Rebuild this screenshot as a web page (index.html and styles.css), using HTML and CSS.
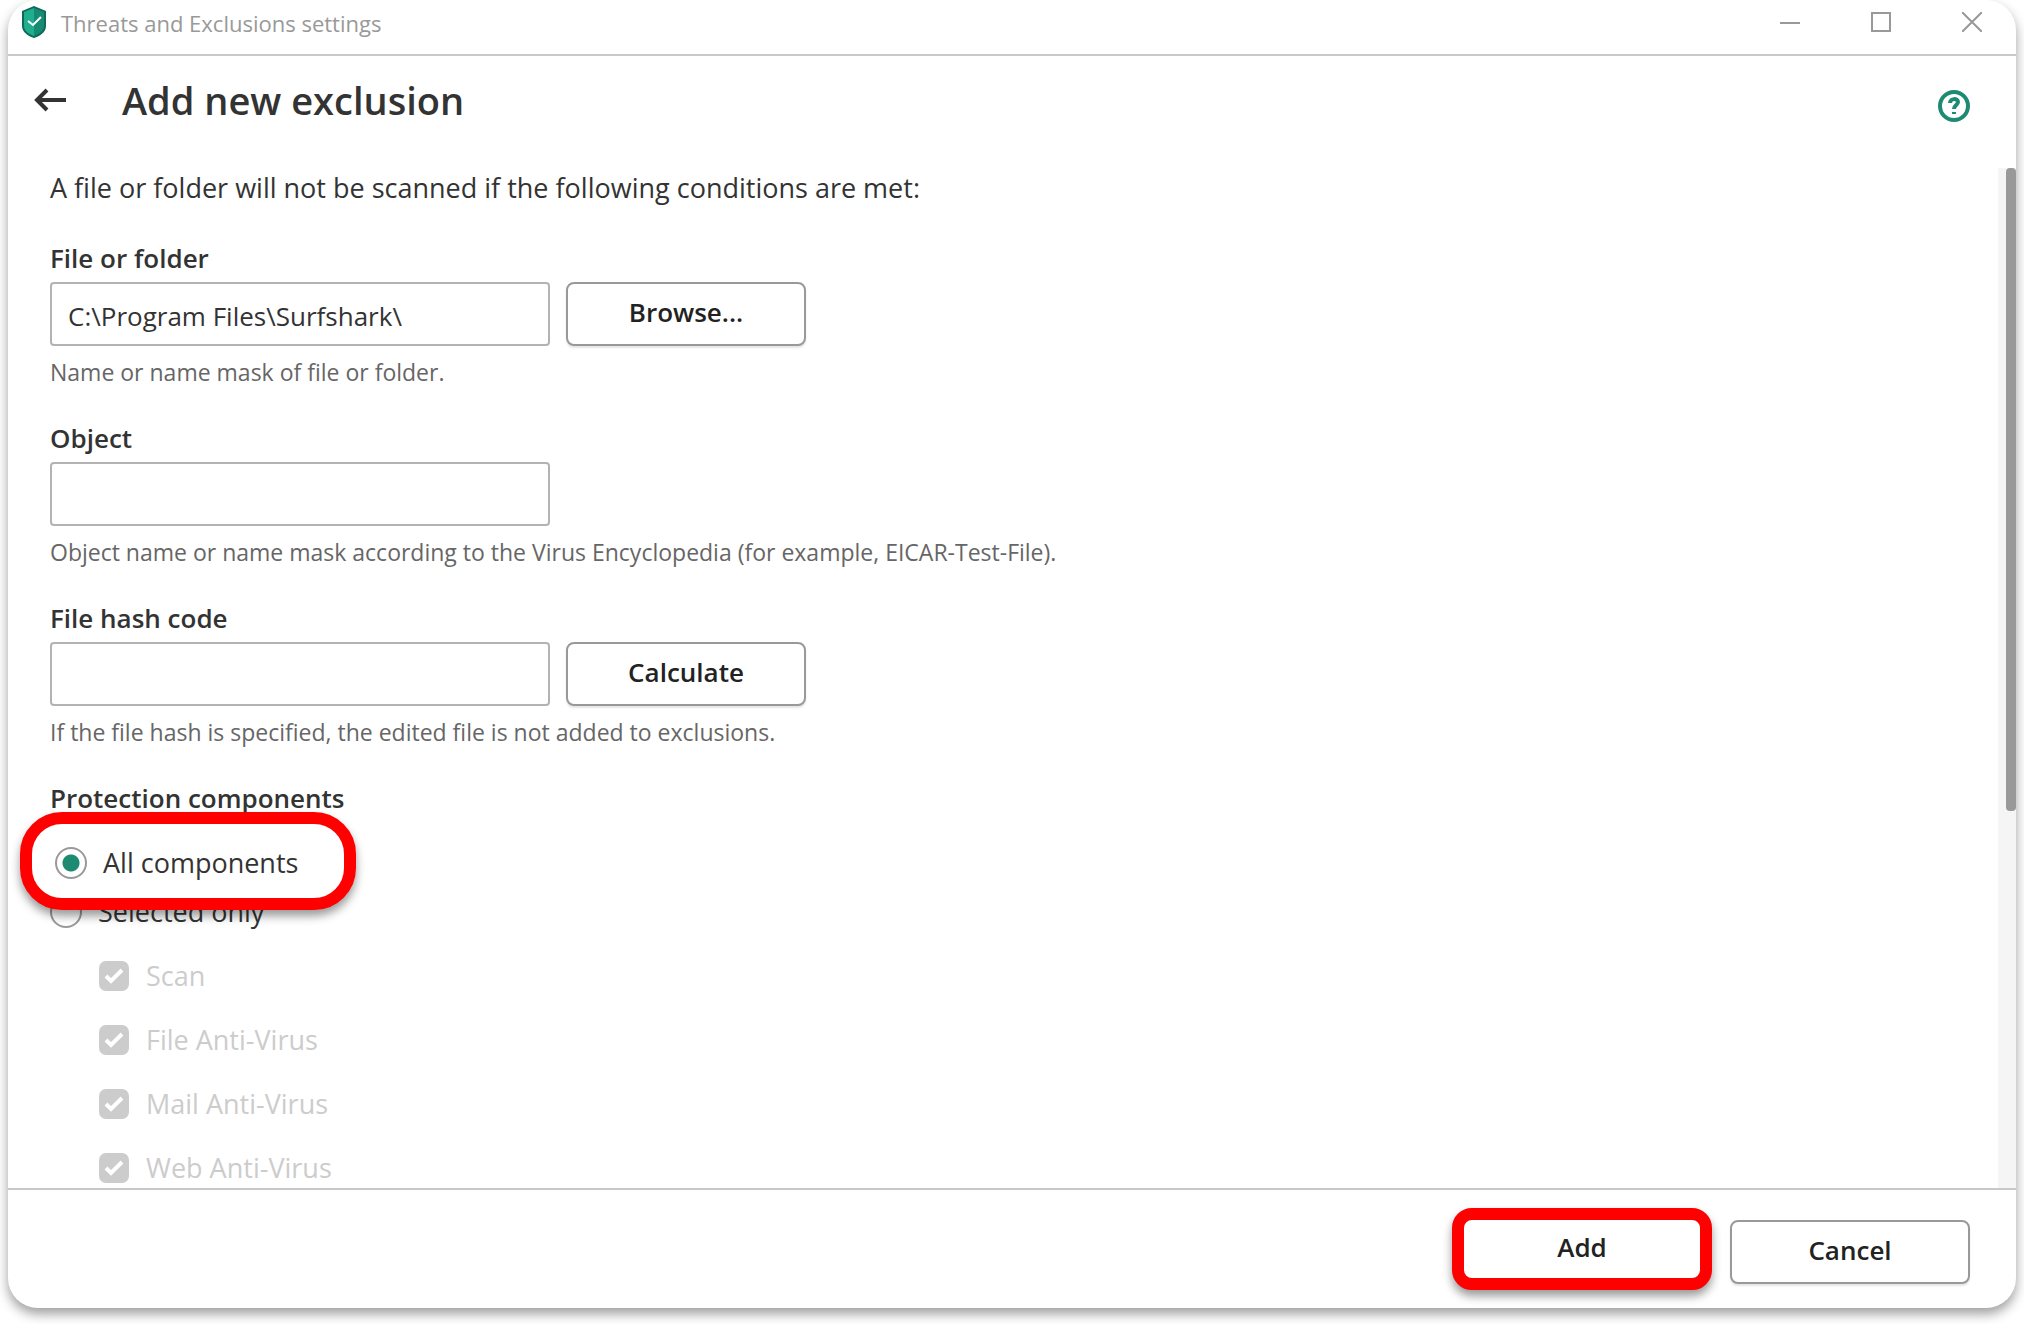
FILE: index.html
```html
<!DOCTYPE html>
<html lang="en">
<head>
    <meta charset="UTF-8">
    <title>Threats and Exclusions settings</title>
    <link rel="stylesheet" href="styles.css">
</head>
<body>
    <div class="window">
        <header class="titlebar">
            <svg class="shield" viewBox="0 0 24 32" aria-hidden="true">
                <path d="M12 0 L24 5 V20 C24 26 18 30 12 32 C6 30 0 26 0 20 V5 Z" fill="#0f6b58"/>
                <path d="M12 2 L2 6 V20 C2 25 7 28 12 30 Z" fill="#1fae8e"/>
                <path d="M12 2 L22 6 V20 C22 25 17 28 12 30 Z" fill="#168a73"/>
                <path d="M6 15 L11 19 L19 11" fill="none" stroke="#fff" stroke-width="2"/>
            </svg>
            <span class="app-name">Threats and Exclusions settings</span>
            <div class="window-buttons">
                <button type="button" aria-label="Minimize"><svg viewBox="0 0 20 20"><path d="M0 11H20"/></svg></button>
                <button type="button" aria-label="Maximize"><svg viewBox="0 0 20 20"><path d="M1 1H19V19H1Z"/></svg></button>
                <button type="button" aria-label="Close"><svg viewBox="0 0 20 20"><path d="M0 0L20 20M20 0L0 20"/></svg></button>
            </div>
        </header>

        <div class="page-head">
            <button type="button" class="back" aria-label="Back">
                <svg viewBox="0 0 32 24"><path d="M32 12H2M13 2L3 12L13 22"/></svg>
            </button>
            <h1>Add new exclusion</h1>
            <a href="#" class="help" aria-label="Help">
                <svg viewBox="0 0 32 32">
                    <circle cx="16" cy="16" r="14"/>
                    <path d="M12 13C12 8 20 8 20 12C20 15 16 15 16 19M16 22V24"/>
                </svg>
            </a>
        </div>

        <div class="body">
            <form class="content" id="exclusion">
                <p class="intro">A file or folder will not be scanned if the following conditions are met:</p>

                <div class="field">
                    <label for="path">File or folder</label>
                    <div class="row">
                        <input type="text" id="path" value="C:\Program Files\Surfshark\">
                        <button type="button" class="btn">Browse...</button>
                    </div>
                    <p class="hint">Name or name mask of file or folder.</p>
                </div>

                <div class="field">
                    <label for="object">Object</label>
                    <div class="row">
                        <input type="text" id="object">
                    </div>
                    <p class="hint">Object name or name mask according to the Virus Encyclopedia (for example, EICAR-Test-File).</p>
                </div>

                <div class="field">
                    <label for="hash">File hash code</label>
                    <div class="row">
                        <input type="text" id="hash">
                        <button type="button" class="btn">Calculate</button>
                    </div>
                    <p class="hint">If the file hash is specified, the edited file is not added to exclusions.</p>
                </div>

                <fieldset>
                    <legend>Protection components</legend>
                    <div class="options">
                        <label class="option callout"><input type="radio" name="components" checked>All components</label>
                        <label class="option"><input type="radio" name="components">Selected only</label>
                        <label class="option sub"><input type="checkbox" checked disabled>Scan</label>
                        <label class="option sub"><input type="checkbox" checked disabled>File Anti-Virus</label>
                        <label class="option sub"><input type="checkbox" checked disabled>Mail Anti-Virus</label>
                        <label class="option sub"><input type="checkbox" checked disabled>Web Anti-Virus</label>
                    </div>
                </fieldset>
            </form>
            <div class="scrollbar"><div class="thumb"></div></div>
        </div>

        <footer>
            <button type="submit" form="exclusion" class="btn add">Add</button>
            <button type="button" class="btn">Cancel</button>
        </footer>
    </div>
</body>
</html>
```
FILE: styles.css
```css
* {
    box-sizing: border-box;
}

body {
    margin: 0;
    padding: 0 8px 16px;
    height: 100vh;
    overflow: hidden;
    background: #fff;
    color: #333;
    font-family: "Open Sans", "Segoe UI", sans-serif;
    font-size: 26px;
    line-height: 36px;
}

p, h1 {
    margin: 0;
}

button, input {
    font: inherit;
    color: inherit;
}

svg {
    display: block;
    fill: none;
}

.window {
    height: 100%;
    display: flex;
    flex-direction: column;
    background: #fff;
    border-radius: 30px;
    overflow: hidden;
    box-shadow: 0 6px 12px rgba(0, 0, 0, 0.38);
}

/* title bar */
.titlebar {
    display: flex;
    align-items: center;
    flex: none;
    height: 56px;
    padding: 0 34px 10px 14px;
    border-bottom: 2px solid #c8c8c8;
    color: #999;
    font-size: 22px;
}

.shield {
    width: 24px;
    height: 32px;
}

.app-name {
    margin-left: 15px;
    padding-top: 2px;
}

.window-buttons {
    display: flex;
    gap: 71px;
    margin-left: auto;
}

.window-buttons button, .back {
    padding: 0;
    border: none;
    background: none;
}

.window-buttons svg {
    width: 20px;
    height: 20px;
    stroke: #999;
    stroke-width: 2;
}

/* heading */
.page-head {
    display: flex;
    align-items: center;
    flex: none;
    height: 112px;
    padding: 0 46px 24px 26px;
}

.back svg {
    width: 32px;
    height: 24px;
    stroke: #333;
    stroke-width: 4;
}

h1 {
    margin-left: 56px;
    font-size: 38px;
    line-height: 48px;
    font-weight: 600;
}

.help {
    margin: 12px 0 0 auto;
}

.help svg {
    width: 32px;
    height: 32px;
    stroke: #1d8a72;
    stroke-width: 4;
}

/* scrolled area */
.body {
    display: flex;
    flex: 1;
    min-height: 0;
}

.content {
    flex: 1;
    padding-left: 42px;
    overflow: hidden;
}

.scrollbar {
    width: 18px;
    padding-left: 8px;
    background: #f5f5f5;
}

.thumb {
    height: 63%;
    border-radius: 4px;
    background: #999;
}

.intro {
    margin: 2px 0 34px;
    font-size: 27px;
}

.field {
    height: 180px;
}

.field label, legend {
    display: block;
    padding: 0;
    font-weight: 600;
}

.row {
    display: flex;
    gap: 16px;
    margin: 6px 0 8px;
}

input[type="text"] {
    width: 500px;
    height: 64px;
    padding: 4px 16px 0;
    border: 2px solid #b3b3b3;
    border-radius: 4px;
    background: #fff;
}

.btn {
    width: 240px;
    height: 64px;
    padding: 0 0 4px;
    border: 2px solid #999;
    border-radius: 8px;
    background: #fff;
    box-shadow: 0 2px 2px rgba(0, 0, 0, 0.1);
    color: #222;
    font-weight: 600;
}

.hint {
    color: #666;
    font-size: 23px;
}

fieldset {
    margin: 0;
    padding: 0;
    border: none;
}

.options {
    position: relative;
    padding-top: 64px;
    font-size: 27px;
}

.option {
    display: flex;
    align-items: center;
    gap: 16px;
    height: 64px;
}

.option input {
    appearance: none;
    flex: none;
    width: 32px;
    height: 32px;
    margin: 0;
}

.option input[type="radio"] {
    border: 2px solid #999;
    border-radius: 50%;
}

.option input[type="radio"]:checked {
    background: radial-gradient(circle, #1d8a72 8px, #fff 9px);
}

.sub {
    padding-left: 48px;
    color: #ccc;
}

/* tick is drawn over a transparent rim, so the box itself is 30px */
.option input[type="checkbox"] {
    border: 1px solid transparent;
    border-radius: 8px;
    background: #ccc url("data:image/svg+xml,%3Csvg xmlns='http://www.w3.org/2000/svg' viewBox='0 0 30 30'%3E%3Cpath d='M7 15L12 20L23 9' fill='none' stroke='%23fff' stroke-width='4'/%3E%3C/svg%3E") padding-box;
}

.callout {
    position: absolute;
    left: -30px;
    top: -4px;
    width: 336px;
    height: 98px;
    padding: 3px 0 0 23px;
    border: 12px solid #f00;
    border-radius: 42px;
    background: #fff;
    box-shadow: 0 6px 10px rgba(0, 0, 0, 0.4);
}

/* bottom bar */
footer {
    display: flex;
    justify-content: flex-end;
    align-items: center;
    gap: 18px;
    flex: none;
    height: 120px;
    padding: 6px 46px 0 0;
    border-top: 2px solid #c8c8c8;
}

.add {
    width: 260px;
    height: 82px;
    margin-bottom: 6px;
    border: 12px solid #f00;
    border-radius: 20px;
    box-shadow: 0 6px 10px rgba(0, 0, 0, 0.4);
}
```
